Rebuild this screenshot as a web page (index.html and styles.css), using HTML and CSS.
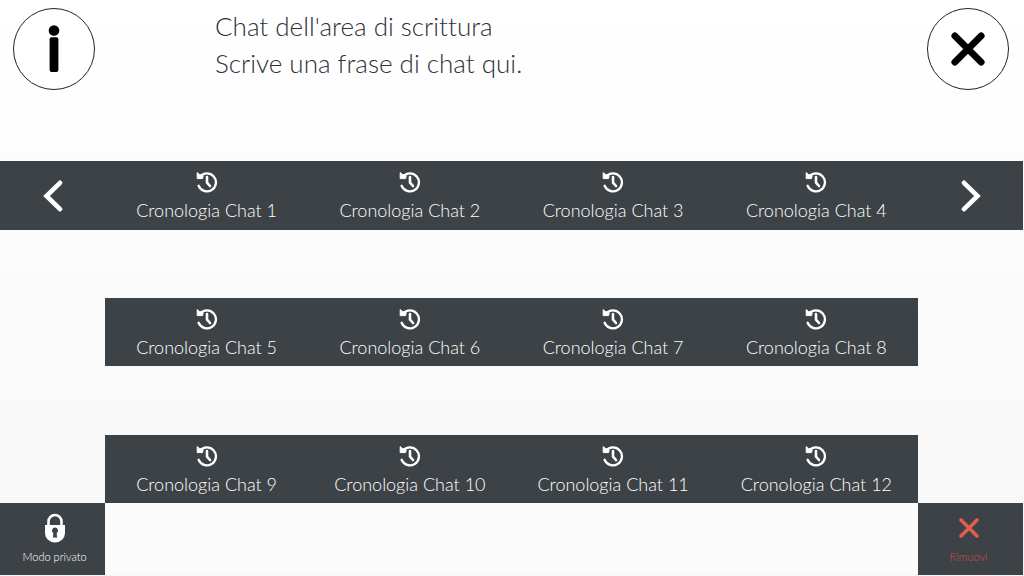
FILE: index.html
```html
<!DOCTYPE html>
<html lang="it">
<head>
  <meta charset="UTF-8">
  <meta name="viewport" content="width=device-width, initial-scale=1.0">
  <title>Cronologia Chat</title>
  <link rel="stylesheet" href="styles.css">
</head>
<body>

  <!-- shared icon -->
  <svg class="sprite" aria-hidden="true">
    <symbol id="history" viewBox="0 0 22 22">
      <path d="M4 5.6A9 9 0 1 1 2.6 14.8" fill="none" stroke="#fff" stroke-width="2.3" stroke-linecap="round"/>
      <path d="M1.2 1.6L3.4 3.4L7.2 4.6L6.6 7.6H1.2Z" fill="#fff" stroke="#fff" stroke-width="1" stroke-linejoin="round"/>
      <path d="M11 6V11.6L14 15" fill="none" stroke="#fff" stroke-width="2.6" stroke-linecap="round" stroke-linejoin="round"/>
    </symbol>
  </svg>

  <header>
    <button class="round" aria-label="Informazioni">
      <svg viewBox="0 0 82 82">
        <circle cx="41" cy="22" r="5.4"/>
        <rect x="36.5" y="29" width="9" height="35.5" rx="2"/>
      </svg>
    </button>
    <textarea class="message" aria-label="Chat dell'area di scrittura" rows="2">Chat dell'area di scrittura
Scrive una frase di chat qui.</textarea>
    <button class="round" aria-label="Chiudi">
      <svg viewBox="0 0 82 82">
        <path d="M27.5 27.5L54.5 54.5M54.5 27.5L27.5 54.5" stroke="#000" stroke-width="7" stroke-linecap="round"/>
      </svg>
    </button>
  </header>

  <main>
    <div class="row full">
      <button class="arrow" aria-label="Precedente">
        <svg viewBox="0 0 20 32"><path d="M17 2.8L3.5 16L17 29.2" fill="none" stroke="#fff" stroke-width="4.6" stroke-linecap="round" stroke-linejoin="miter"/></svg>
      </button>
      <div class="chats">
        <button class="chat"><svg><use href="#history"/></svg>Cronologia Chat 1</button>
        <button class="chat"><svg><use href="#history"/></svg>Cronologia Chat 2</button>
        <button class="chat"><svg><use href="#history"/></svg>Cronologia Chat 3</button>
        <button class="chat"><svg><use href="#history"/></svg>Cronologia Chat 4</button>
      </div>
      <button class="arrow" aria-label="Successivo">
        <svg viewBox="0 0 20 32"><path d="M3 2.8L16.5 16L3 29.2" fill="none" stroke="#fff" stroke-width="4.6" stroke-linecap="round" stroke-linejoin="miter"/></svg>
      </button>
    </div>

    <div class="row">
      <div class="chats">
        <button class="chat"><svg><use href="#history"/></svg>Cronologia Chat 5</button>
        <button class="chat"><svg><use href="#history"/></svg>Cronologia Chat 6</button>
        <button class="chat"><svg><use href="#history"/></svg>Cronologia Chat 7</button>
        <button class="chat"><svg><use href="#history"/></svg>Cronologia Chat 8</button>
      </div>
    </div>

    <div class="row">
      <div class="chats">
        <button class="chat"><svg><use href="#history"/></svg>Cronologia Chat 9</button>
        <button class="chat"><svg><use href="#history"/></svg>Cronologia Chat 10</button>
        <button class="chat"><svg><use href="#history"/></svg>Cronologia Chat 11</button>
        <button class="chat"><svg><use href="#history"/></svg>Cronologia Chat 12</button>
      </div>
    </div>
  </main>

  <footer>
    <button class="action private">
      <svg viewBox="0 0 30 30">
        <path d="M8.5 14V8.5A6.5 6.5 0 0 1 21.5 8.5V14" fill="none" stroke="#fff" stroke-width="2.6"/>
        <path fill="#fff" fill-rule="evenodd" d="M5 12H25V20A10 9.5 0 0 1 5 20ZM15 14.5A3.1 3.1 0 0 0 13.4 20.2L12.8 24.5H17.2L16.6 20.2A3.1 3.1 0 0 0 15 14.5Z"/>
      </svg>
      Modo privato
    </button>
    <div class="panel"></div>
    <button class="action remove">
      <svg viewBox="0 0 30 30">
        <path d="M7 7L23 23M23 7L7 23" stroke="#e45b50" stroke-width="3.6" stroke-linecap="round"/>
      </svg>
      Rimuovi
    </button>
  </footer>

</body>
</html>
```
FILE: styles.css
```css
:root {
  --dark: #3d4246;
  --side: 105px;
}

* {
  box-sizing: border-box;
}

body {
  margin: 0;
  padding-right: 1px;
  min-height: 100vh;
  font-family: Lato, "Open Sans", sans-serif;
  font-weight: 300;
  font-variant-ligatures: none;
  background: linear-gradient(#fff, #f7f7f7);
}

button {
  margin: 0;
  padding: 0;
  border: 0;
  font: inherit;
  color: #fff;
  background: var(--dark);
  cursor: pointer;
}

.sprite {
  display: block;
  width: 0;
  height: 0;
}

header {
  display: flex;
  align-items: flex-start;
  min-height: 161px;
  padding: 8px 14px 0 13px;
}

.round {
  flex: none;
  width: 82px;
  height: 82px;
  border: 1px solid #222;
  border-radius: 50%;
  background: #fff;
}

.round svg {
  display: block;
  width: 100%;
}

.message {
  flex: 1;
  height: 80px;
  margin: 0 120px;
  padding: 0;
  border: 0;
  outline: 0;
  resize: none;
  overflow: hidden;
  font: inherit;
  font-size: 26px;
  font-variant-ligatures: none;
  line-height: 37px;
  color: #2c3039;
  background: transparent;
}

.row {
  display: grid;
  grid-template-columns: var(--side) 1fr var(--side);
  margin-bottom: 69px;
}

.row:last-child {
  margin-bottom: 0;
}

.row .chats {
  grid-column: 2;
}

.row.full {
  min-height: 69px;
  margin-bottom: 68px;
  background: var(--dark);
}

.chats {
  display: grid;
  grid-template-columns: repeat(4, 1fr);
}

.chat {
  display: flex;
  flex-direction: column;
  align-items: center;
  min-height: 68px;
  padding-top: 10px;
  font-size: 18px;
  line-height: 24px;
  gap: 5px;
}

.chat svg {
  width: 22px;
  height: 22px;
}

.arrow svg {
  display: block;
  width: 20px;
  height: 32px;
  margin: auto;
}

footer {
  display: grid;
  grid-template-columns: var(--side) 1fr var(--side);
}

.action {
  display: flex;
  flex-direction: column;
  align-items: center;
  height: 72px;
  padding-top: 10px;
  font-size: 11px;
  line-height: 16px;
  gap: 6px;
}

.action svg {
  width: 30px;
  height: 30px;
}

.private {
  padding-left: 4px;
}

.remove {
  padding-right: 4px;
  color: #d94a43;
}

.panel {
  background: #fbfbfb;
}
```
